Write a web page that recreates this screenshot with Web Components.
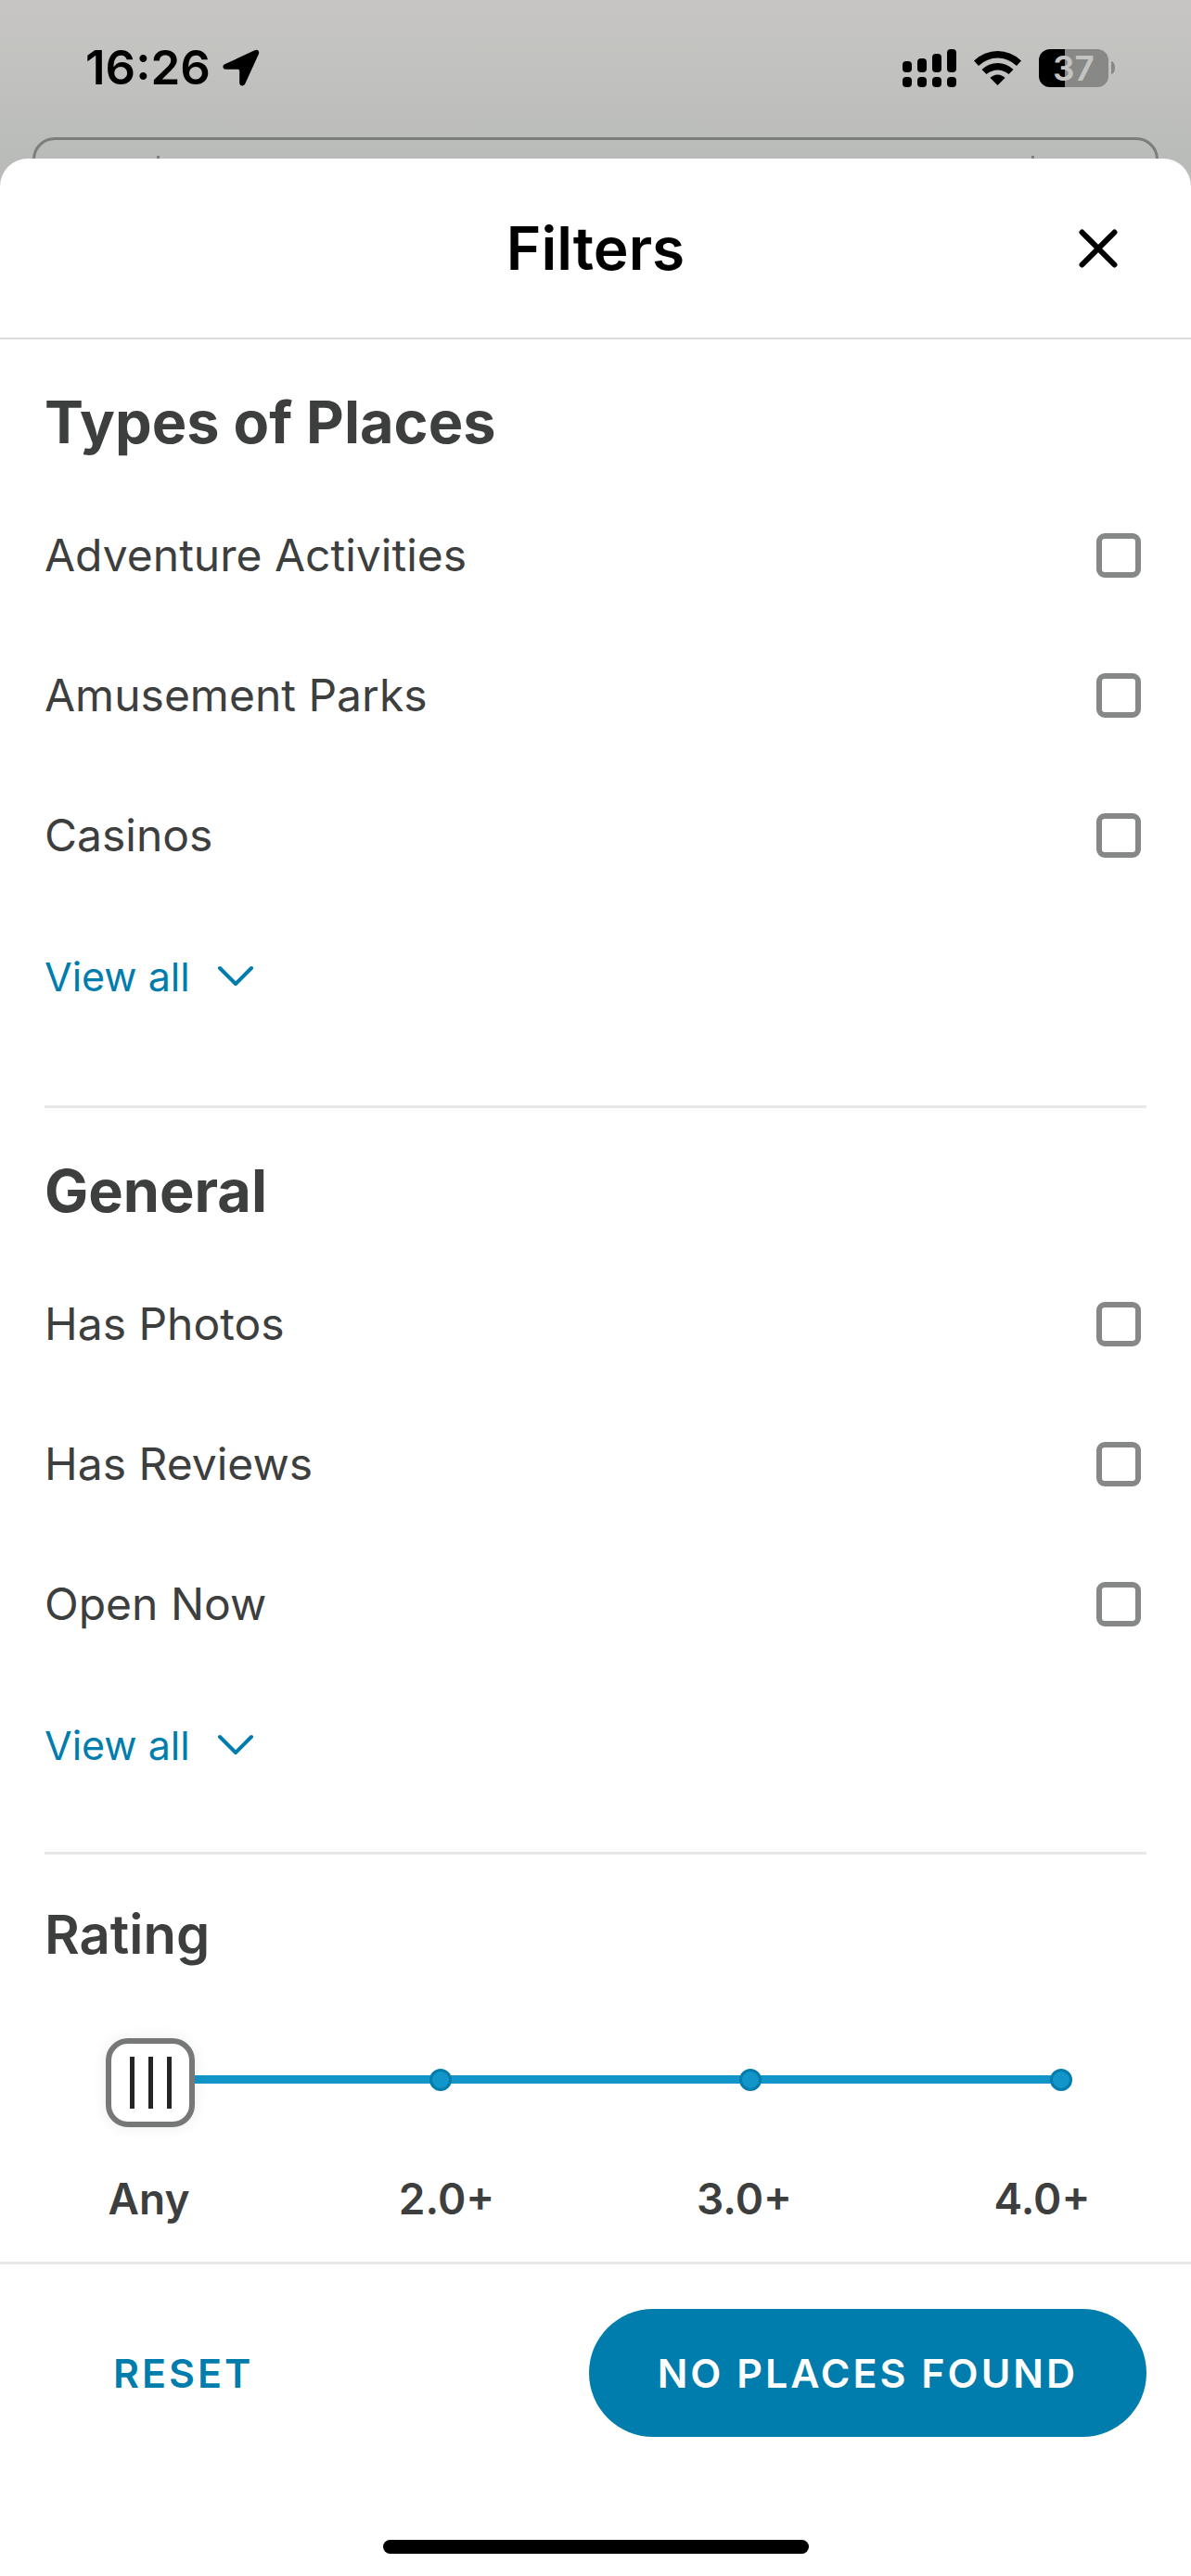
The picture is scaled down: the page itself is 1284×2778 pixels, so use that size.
<!DOCTYPE html>
<html lang="en">
<head>
<meta charset="utf-8">
<meta name="viewport" content="width=device-width, initial-scale=1">
<title>Filters</title>
<style>
  :root {
    --ink: #3d3e3e;
    --brand: #007dad;
    --track: #1296ca;
    --rule: #e8e8e8;
    --gutter: 48px;
  }
  html { height: 100%; }
  body {
    margin: 0;
    min-height: 100%;
    display: flex;
    flex-direction: column;
    font-family: Inter, "Liberation Sans", sans-serif;
    color: var(--ink);
    background: #b9bbb8;
  }
  filter-screen { flex: 1; }
</style>
</head>
<body>
<filter-screen>
  <status-bar slot="status" time="16:26" battery="37"></status-bar>
  <sheet-header slot="header">Filters</sheet-header>
  <filter-section heading="Types of Places" roomy>
    <filter-option name="adventure">Adventure Activities</filter-option>
    <filter-option name="amusement">Amusement Parks</filter-option>
    <filter-option name="casinos">Casinos</filter-option>
    <view-all slot="more">View all</view-all>
  </filter-section>
  <filter-section heading="General">
    <filter-option name="photos">Has Photos</filter-option>
    <filter-option name="reviews">Has Reviews</filter-option>
    <filter-option name="open">Open Now</filter-option>
    <view-all slot="more">View all</view-all>
  </filter-section>
  <rating-slider heading="Rating" steps="Any,2.0+,3.0+,4.0+"></rating-slider>
  <sheet-footer slot="footer">
    <action-button slot="secondary">RESET</action-button>
    <action-button primary>NO PLACES FOUND</action-button>
  </sheet-footer>
</filter-screen>

<script>
const define = (name, render) => customElements.define(name, class extends HTMLElement {
  connectedCallback() {
    if (this.shadowRoot) return;
    this.attachShadow({ mode: 'open' }).innerHTML = render(this);
  }
});

define('filter-screen', () => `
  <style>
    :host { display: flex; flex-direction: column; background: linear-gradient(#c7c5c3, #c1c2bf 80px, #b9bbb8 180px); }
    .peek { height: 23px; padding: 0 35px; overflow: hidden; }
    .search { box-sizing: border-box; height: 96px; border: 3px solid #7c7e7b; border-radius: 24px; padding: 17px 131px; display: flex; justify-content: space-between; }
    .search i { width: 3px; height: 40px; background: #7c7e7b; }
    .sheet { flex: 1; display: flex; flex-direction: column; background: #fff; border-radius: 30px 30px 0 0; }
    main { flex: 1; }
  </style>
  <slot name="status"></slot>
  <div class="peek"><div class="search"><i></i><i></i></div></div>
  <section class="sheet" aria-label="Filters">
    <slot name="header"></slot>
    <main><slot></slot></main>
    <slot name="footer"></slot>
  </section>`);

define('status-bar', el => `
  <style>
    :host { display: flex; align-items: center; justify-content: space-between; box-sizing: border-box; height: 148px; padding: 0 82px 2px 92px; color: #000; }
    div { display: flex; align-items: center; }
    .left { gap: 13px; }
    .right { gap: 19px; }
    time { font-size: 51px; line-height: 60px; font-weight: 600; }
    svg { display: block; }
    .battery { gap: 3px; }
    .cell { width: 75px; height: 41px; border-radius: 12px; justify-content: center; background: linear-gradient(90deg, #000 28px, #888986 28px); color: #c3c4c1; font-size: 37px; line-height: 41px; font-weight: 600; }
    .nub { width: 4px; height: 14px; border-radius: 0 4px 4px 0 / 0 7px 7px 0; background: #888986; }
  </style>
  <div class="left">
    <time>${el.getAttribute('time')}</time>
    <svg width="40" height="40" viewBox="0 0 40 40" aria-hidden="true"><path d="M34.6 1.3C37.4 -.3 40 1.5 39 5L24.3 37.3C23 40.4 18.3 40 18.2 36.5V23.5Q18.2 21.8 16.5 21.8H3.5C0 21.7 -.8 17.8 2.3 16.2Z"/></svg>
  </div>
  <div class="right">
    <svg width="58" height="41" viewBox="0 0 58 41" aria-hidden="true">
      <rect y="13" width="10" height="12" rx="4"/><rect x="16" y="10" width="10" height="15" rx="4"/><rect x="32" y="5" width="10" height="20" rx="4"/><rect x="48" width="10" height="25" rx="4"/>
      <rect y="30" width="10" height="11" rx="4"/><rect x="16" y="30" width="10" height="11" rx="4"/><rect x="32" y="30" width="10" height="11" rx="4"/><rect x="48" y="30" width="10" height="11" rx="4"/>
    </svg>
    <svg width="51" height="37" viewBox="0 0 51 37" aria-hidden="true">
      <path d="M0 10.5Q11 0 25.5 0T51 10.5L46 16Q37 7.5 25.5 7.5T5 16Z"/>
      <path d="M8.5 20Q16 13 25.5 13T42.5 20L37.5 25Q32 20.5 25.5 20.5T13.5 25Z"/>
      <path d="M17.5 29Q21 25.5 25.5 25.5T33.5 29L25.5 37Z"/>
    </svg>
    <div class="battery"><div class="cell">${el.getAttribute('battery')}</div><div class="nub"></div></div>
  </div>`);

define('sheet-header', () => `
  <style>
    :host { display: grid; grid-template-columns: 1fr auto 1fr; align-items: center; height: 193px; padding: 0 70px; border-bottom: 2px solid #dcdcdd; color: #000; }
    h1 { grid-column: 2; margin: 0; font-size: 64px; line-height: 78px; font-weight: 600; }
    button { grid-column: 3; justify-self: end; display: flex; padding: 8px; border: 0; background: none; color: inherit; }
  </style>
  <h1><slot></slot></h1>
  <button type="button" aria-label="Close">
    <svg width="44" height="44" viewBox="0 0 44 44" fill="none" stroke="currentColor" stroke-width="6" stroke-linecap="round"><path d="M4.5 4.5L39.5 39.5M39.5 4.5L4.5 39.5"/></svg>
  </button>`);

define('filter-section', el => `
  <style>
    :host { display: block; margin: 0 var(--gutter); padding: 50px 0 85px; border-bottom: 3px solid var(--rule); }
    :host([roomy]) { padding-bottom: 109px; }
    h2 { margin: 0 0 29px; font-size: 63px; line-height: 78px; font-weight: 700; }
    .more { margin-top: 47px; }
  </style>
  <h2>${el.getAttribute('heading')}</h2>
  <slot></slot>
  <div class="more"><slot name="more"></slot></div>`);

define('filter-option', el => `
  <style>
    :host { display: block; }
    label { display: flex; align-items: center; justify-content: space-between; height: 151px; padding-right: 6px; font-size: 48px; line-height: 60px; }
    input { appearance: none; box-sizing: border-box; width: 48px; height: 48px; margin: 0; border: 6px solid #868887; border-radius: 9px; background: #fff; }
    input:checked { background: var(--brand); border-color: var(--brand); }
  </style>
  <label><span><slot></slot></span><input type="checkbox" name="${el.getAttribute('name')}"></label>`);

define('view-all', () => `
  <style>
    :host { display: flex; }
    button { display: flex; align-items: center; gap: 29px; padding: 0; border: 0; background: none; color: var(--brand); font: inherit; font-size: 43px; line-height: 60px; }
    svg { display: block; }
  </style>
  <button type="button"><slot></slot>
    <svg width="40" height="24" viewBox="0 0 40 24" fill="none" stroke="currentColor" stroke-width="4" stroke-linecap="round" stroke-linejoin="round" aria-hidden="true"><path d="M3 3L20 20L37 3"/></svg>
  </button>`);

define('rating-slider', el => {
  const steps = el.getAttribute('steps').split(',');
  return `
  <style>
    :host { display: block; padding: 50px 0 40px; }
    label { display: block; padding: 0 var(--gutter); font-size: 58px; line-height: 72px; font-weight: 600; }
    .slider { display: grid; margin: 76px 128px 49px 114px; }
    .track, input { grid-area: 1 / 1; }
    .track { display: flex; align-items: center; justify-content: space-between; padding: 0 0 6px 14px; background: linear-gradient(var(--track), var(--track)) 24px 40px / calc(100% - 36px) 9px no-repeat; }
    .track i { box-sizing: border-box; width: 24px; height: 24px; border: 3px solid var(--brand); border-radius: 50%; background: var(--track); }
    input { appearance: none; width: 100%; height: 96px; margin: 0; background: none; }
    input::-webkit-slider-thumb {
      appearance: none; box-sizing: border-box; width: 96px; height: 96px;
      border: 6px solid #767877; border-radius: 24px;
      background:
        linear-gradient(#232425, #232425) 20px 14px / 5px 56px no-repeat,
        linear-gradient(#232425, #232425) 40px 14px / 5px 56px no-repeat,
        linear-gradient(#232425, #232425) 60px 14px / 5px 56px no-repeat,
        #fff;
      box-shadow: 0 0 16px rgba(0, 0, 0, .08);
    }
    .steps { display: grid; grid-template-columns: repeat(${steps.length}, 1fr); text-align: center; font-size: 46px; line-height: 56px; font-weight: 600; }
  </style>
  <label for="range">${el.getAttribute('heading')}</label>
  <div class="slider">
    <div class="track">${steps.map(() => '<i></i>').join('')}</div>
    <input id="range" type="range" min="0" max="${steps.length - 1}" value="0">
  </div>
  <div class="steps">${steps.map(s => `<span>${s}</span>`).join('')}</div>`;
});

define('sheet-footer', () => `
  <style>
    :host { display: block; padding: 48px var(--gutter) 24px; border-top: 3px solid var(--rule); }
    .actions { display: flex; justify-content: space-between; }
    .home { width: 459px; height: 15px; margin: 111px auto 0; border-radius: 8px; background: #000; }
  </style>
  <div class="actions"><slot name="secondary"></slot><slot></slot></div>
  <div class="home"></div>`);

define('action-button', () => `
  <style>
    :host { display: block; }
    button { height: 138px; padding: 0 74px; border: 0; border-radius: 69px; background: none; color: var(--brand); font: inherit; font-size: 43px; line-height: 54px; font-weight: 600; letter-spacing: 3px; }
    :host([primary]) button { background: var(--brand); color: #fff; }
  </style>
  <button type="button"><slot></slot></button>`);
</script>
</body>
</html>
